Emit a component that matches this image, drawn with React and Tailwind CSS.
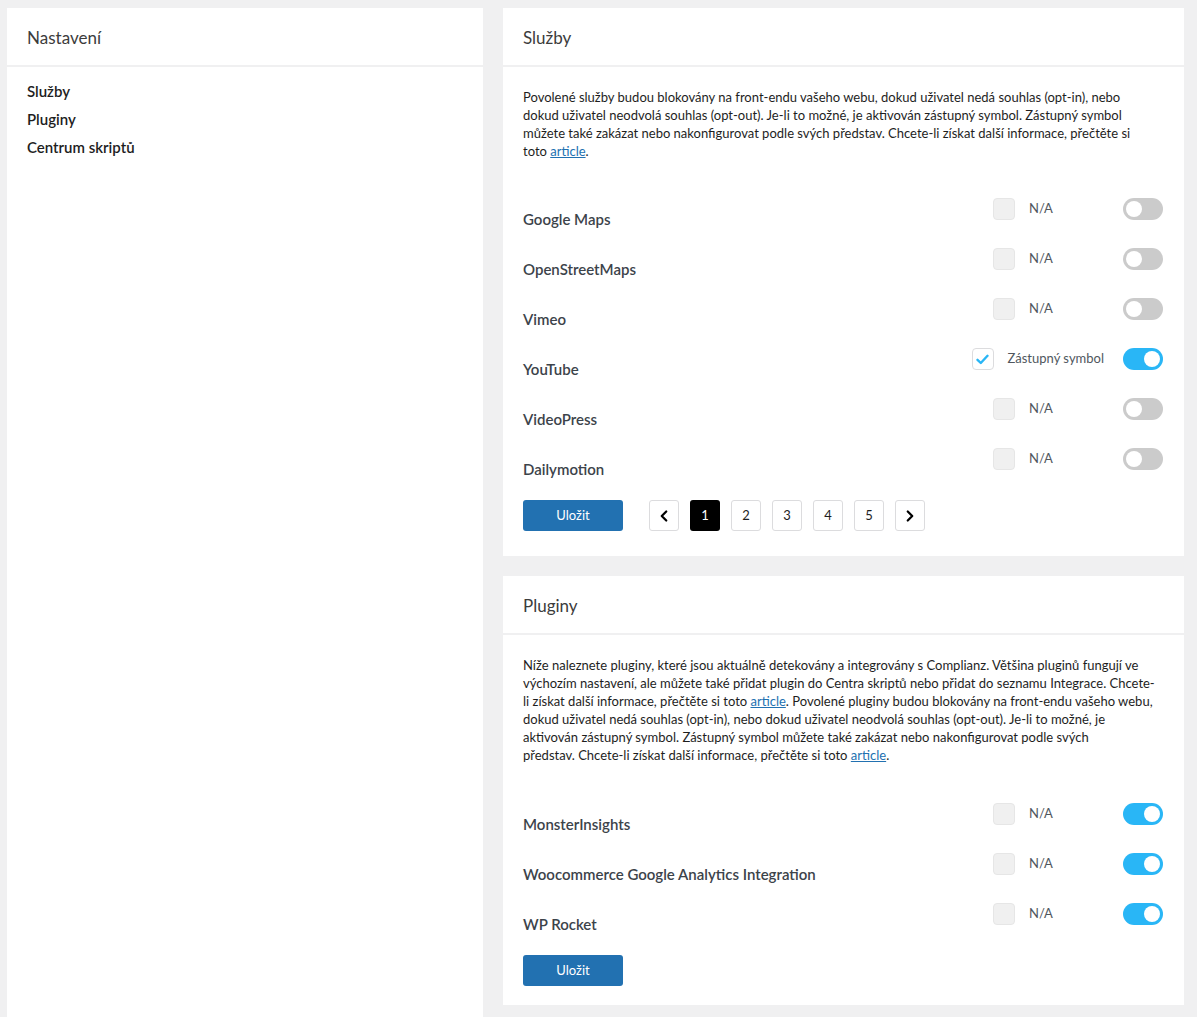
import { ChevronLeft, ChevronRight } from "lucide-react";

const services = [
  { name: "Google Maps", checked: false, label: "N/A", on: false },
  { name: "OpenStreetMaps", checked: false, label: "N/A", on: false },
  { name: "Vimeo", checked: false, label: "N/A", on: false },
  { name: "YouTube", checked: true, label: "Zástupný symbol", on: true },
  { name: "VideoPress", checked: false, label: "N/A", on: false },
  { name: "Dailymotion", checked: false, label: "N/A", on: false },
];

const plugins = [
  { name: "MonsterInsights", checked: false, label: "N/A", on: true },
  { name: "Woocommerce Google Analytics Integration", checked: false, label: "N/A", on: true },
  { name: "WP Rocket", checked: false, label: "N/A", on: true },
];

const Checkbox = ({ checked }) =>
  checked ? (
    <div className="w-[22px] h-[22px] rounded-[4px] border border-[#dcdcde] bg-white flex items-center justify-center">
      <svg width="13" height="11" viewBox="0 0 13 11" fill="none">
        <path d="M1.5 5.8 L4.8 9 L11.5 1.8" stroke="#29b6f6" strokeWidth="2.4" strokeLinecap="round" strokeLinejoin="round" />
      </svg>
    </div>
  ) : (
    <div className="w-[22px] h-[22px] rounded-[4px] border border-[#e6e6e6] bg-[#f0f0f0]"></div>
  );

const Toggle = ({ on }) => (
  <div
    className={`w-[40px] h-[22px] rounded-full flex items-center px-[3px] ${
      on ? "bg-[#29b6f6] justify-end" : "bg-[#cbcbcb] justify-start"
    }`}
  >
    <div className="w-[16px] h-[16px] rounded-full bg-white"></div>
  </div>
);

const Row = ({ item }) => (
  <div className="h-[50px] flex justify-between items-start">
    <div className="pt-[11px] text-[15px] leading-[20px] font-semibold text-[#3c434a]">{item.name}</div>
    <div className="flex items-center pr-[1px]">
      <Checkbox checked={item.checked} />
      <span className="ml-[14px] min-w-[75px] text-[13px] text-[#50575e]">{item.label}</span>
      <div className="ml-[19px]">
        <Toggle on={item.on} />
      </div>
    </div>
  </div>
);

const CardHeader = ({ title }) => (
  <div className="h-[59px] px-[20px] pt-[2px] flex items-center border-b-2 border-[#f0f0f1] text-[17px] text-[#3c3c3c]">
    {title}
  </div>
);

const SaveButton = () => (
  <button className="w-[100px] h-[31px] rounded-[3px] bg-[#2271b1] text-white text-[13px]">Uložit</button>
);

const Article = () => <a className="text-[#2271b1] underline">article</a>;

const App = () => {
  return (
    <div className="min-h-screen bg-[#f0f0f1] flex gap-[20px] pl-[7px] pr-[13px] pt-[8px]" style={{ fontFamily: "Lato, 'Noto Sans', sans-serif" }}>
      <div className="w-[476px] bg-white shrink-0">
        <CardHeader title="Nastavení" />
        <div className="px-[20px] pt-[10px] text-[15px] leading-[28px] font-semibold text-[#1e1e1e]">
          <div>Služby</div>
          <div>Pluginy</div>
          <div>Centrum skriptů</div>
        </div>
      </div>

      <div className="flex-1 flex flex-col gap-[20px] pb-[12px]">
        <div className="bg-white">
          <CardHeader title="Služby" />
          <div className="px-[20px] pt-[21px] pb-[25px]">
            <p className="text-[13px] leading-[18px] text-[#1e1e1e]">
              Povolené služby budou blokovány na front-endu vašeho webu, dokud uživatel nedá souhlas (opt-in), nebo
              <br />
              dokud uživatel neodvolá souhlas (opt-out). Je-li to možné, je aktivován zástupný symbol. Zástupný symbol
              <br />
              můžete také zakázat nebo nakonfigurovat podle svých představ. Chcete-li získat další informace, přečtěte si
              <br />
              toto <Article />.
            </p>
            <div className="mt-[38px]">
              {services.map((s) => (
                <Row key={s.name} item={s} />
              ))}
            </div>
            <div className="mt-[2px] flex items-center">
              <SaveButton />
              <div className="ml-[26px] flex gap-[11px]">
                <div className="w-[30px] h-[31px] rounded-[3px] border border-[#dcdcde] bg-white flex items-center justify-center">
                  <ChevronLeft size={18} strokeWidth={3} color="#000" />
                </div>
                {[1, 2, 3, 4, 5].map((n) => (
                  <div
                    key={n}
                    className={`w-[30px] h-[31px] rounded-[3px] flex items-center justify-center text-[13px] ${
                      n === 1 ? "bg-black text-white" : "border border-[#dcdcde] bg-white text-[#1e1e1e]"
                    }`}
                  >
                    {n}
                  </div>
                ))}
                <div className="w-[30px] h-[31px] rounded-[3px] border border-[#dcdcde] bg-white flex items-center justify-center">
                  <ChevronRight size={18} strokeWidth={3} color="#000" />
                </div>
              </div>
            </div>
          </div>
        </div>

        <div className="bg-white">
          <CardHeader title="Pluginy" />
          <div className="px-[20px] pt-[21px] pb-[19px]">
            <p className="text-[13px] leading-[18px] text-[#1e1e1e]">
              Níže naleznete pluginy, které jsou aktuálně detekovány a integrovány s Complianz. Většina pluginů fungují ve
              <br />
              výchozím nastavení, ale můžete také přidat plugin do Centra skriptů nebo přidat do seznamu Integrace. Chcete-
              <br />
              li získat další informace, přečtěte si toto <Article />. Povolené pluginy budou blokovány na front-endu vašeho webu,
              <br />
              dokud uživatel nedá souhlas (opt-in), nebo dokud uživatel neodvolá souhlas (opt-out). Je-li to možné, je
              <br />
              aktivován zástupný symbol. Zástupný symbol můžete také zakázat nebo nakonfigurovat podle svých
              <br />
              představ. Chcete-li získat další informace, přečtěte si toto <Article />.
            </p>
            <div className="mt-[39px]">
              {plugins.map((s) => (
                <Row key={s.name} item={s} />
              ))}
            </div>
            <div className="mt-[2px]">
              <SaveButton />
            </div>
          </div>
        </div>
      </div>
    </div>
  );
};

export default App;
